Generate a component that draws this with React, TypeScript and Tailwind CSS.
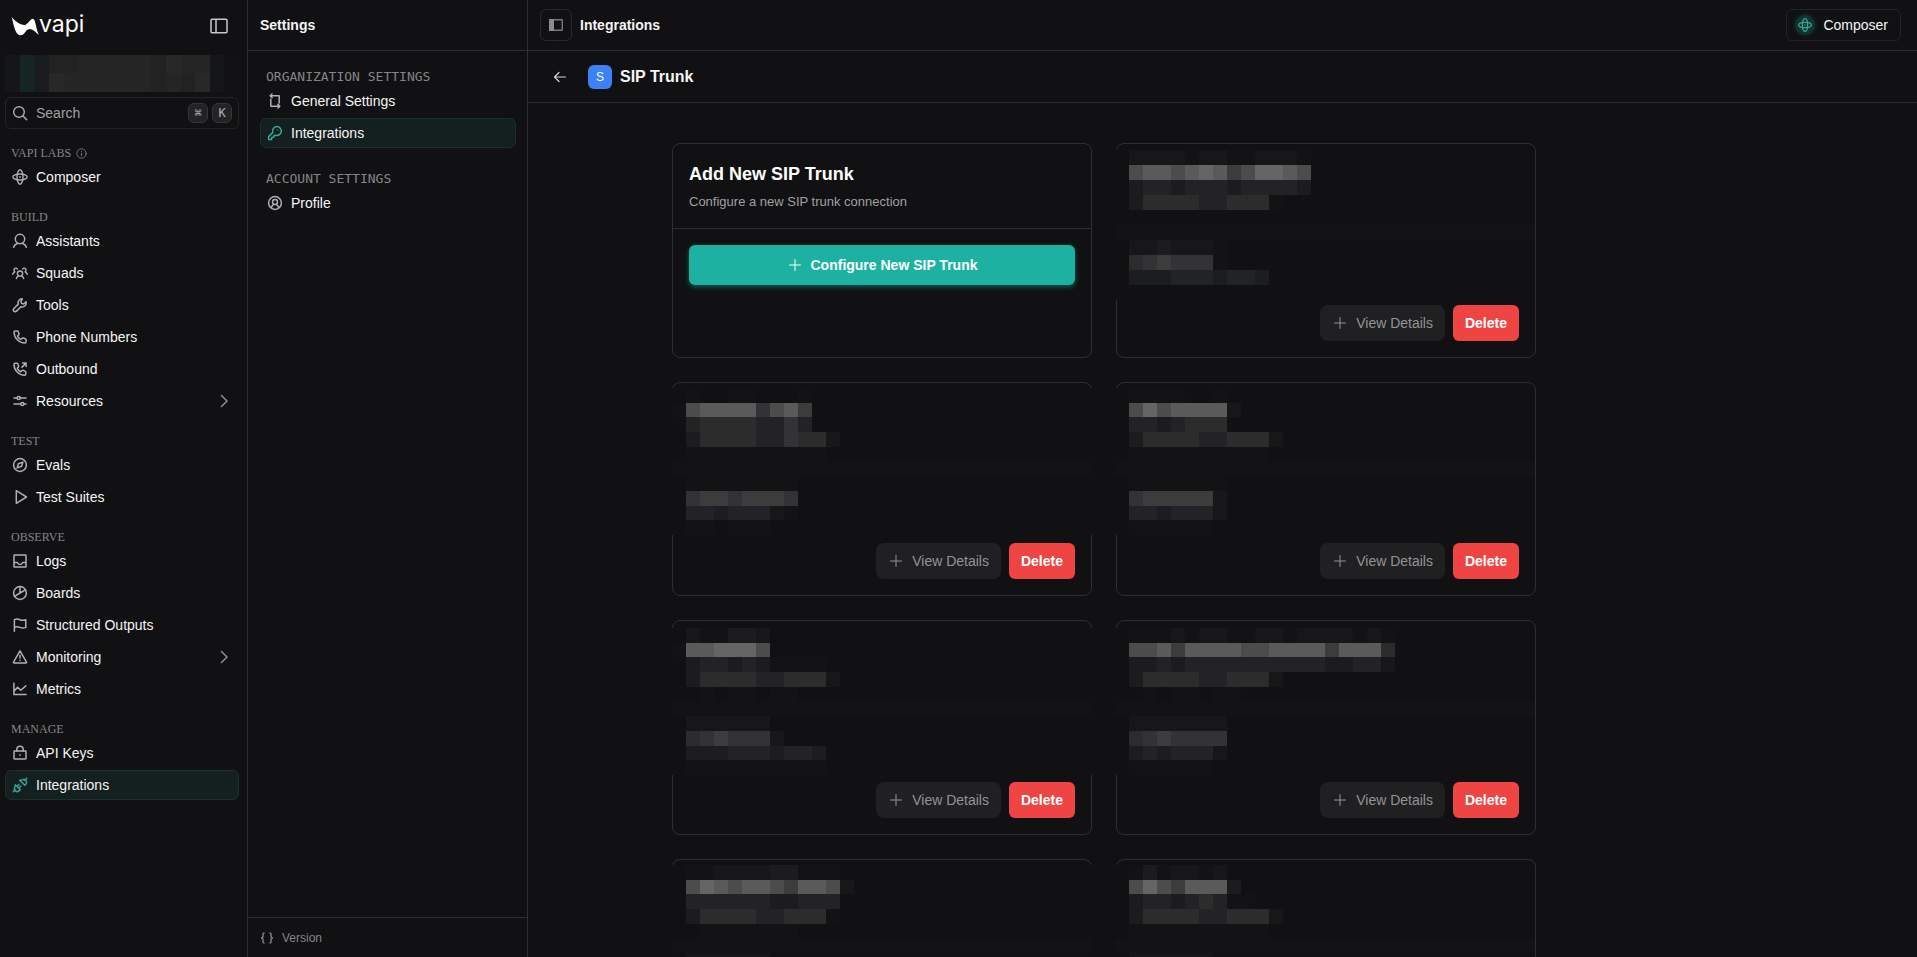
import React from "react";

type IconProps = { className?: string };

function Svg({ className = "", w = 1.5, children }: IconProps & { w?: number; children: React.ReactNode }) {
  return (
    <svg
      viewBox="0 0 16 16"
      aria-hidden="true"
      className={`size-4 shrink-0 ${className}`}
      fill="none"
      stroke="currentColor"
      strokeWidth={w}
      strokeLinecap="round"
      strokeLinejoin="round"
    >
      {children}
    </svg>
  );
}

const ComposerIcon = (p: IconProps) => (
  <Svg {...p} w={1.4}>
    <ellipse cx="8" cy="8" rx="7.2" ry="3" />
    <ellipse cx="8" cy="8" rx="3" ry="7.2" />
    <circle cx="8" cy="8" r="0.9" fill="currentColor" stroke="none" />
  </Svg>
);
const AssistantIcon = (p: IconProps) => (
  <Svg {...p}>
    <circle cx="8" cy="6" r="4.7" />
    <path d="M1.6 14.300c.6-2 2-3.400 4-4.100M14.400 14.300c-.6-2-2-3.400-4-4.100" />
  </Svg>
);
const SquadIcon = (p: IconProps) => (
  <Svg {...p} w={1.4}>
    <circle cx="8" cy="8.600" r="2.600" />
    <path d="M4.300 13.600c.3-1.300 1-2.200 2.100-2.800M11.700 13.600c-.3-1.300-1-2.200-2.100-2.800" />
    <path d="M5.300 3.900C4.300 2.500 2.100 3.100 2 4.900c0 .8.3 1.400.8 1.800M2.600 7C1.500 7.500.9 8.300.7 9.300M10.700 3.900c1-1.400 3.200-.8 3.300 1 0 .8-.3 1.400-.8 1.800M13.400 7c1.100.5 1.700 1.300 1.900 2.300" />
  </Svg>
);
const ToolIcon = (p: IconProps) => (
  <Svg {...p}>
    <path d="M10.300 1.800a4 4 0 0 0-4 5.300L1.900 11.500a1.800 1.800 0 0 0 2.600 2.600l4.400-4.400a4 4 0 0 0 5.100-5l-2.400 2.300-2.100-.6-.6-2.100z" />
  </Svg>
);
const PhoneIcon = (p: IconProps) => (
  <Svg {...p}>
    <path d="M3.200 1.900h2.200c.4 0 .6.300.8.700l.8 2.100c.1.400 0 .7-.2 1L5.600 7.100c.6 1.500 1.800 2.700 3.300 3.300l1.400-1.200c.3-.2.6-.3 1-.2l2.100.8c.4.200.7.400.7.800v2.200c0 .7-.5 1.200-1.200 1.200C7 14 2 9 2 3.100c0-.7.5-1.200 1.200-1.200z" />
  </Svg>
);
const OutboundIcon = (p: IconProps) => (
  <Svg {...p}>
    <path d="M3.200 2.300h1.900c.4 0 .6.300.8.700l.7 1.900c.1.400 0 .7-.2 1L5.300 7.100c.6 1.500 1.900 2.900 3.500 3.600l1.300-1.200c.3-.2.6-.3 1-.2l2 .8c.4.200.7.400.7.800V13c0 .7-.5 1.200-1.200 1.200C6.800 14.200 2 9.200 2 3.500c0-.7.5-1.200 1.200-1.200zM10 6.100l4-4M10.600 2h3.500v3.500" />
  </Svg>
);
const SliderIcon = (p: IconProps) => (
  <Svg {...p}>
    <path d="M2 5h3M8.400 5H14M2 11h6.600M12 11h2" />
    <circle cx="6.700" cy="5" r="1.600" />
    <circle cx="10.300" cy="11" r="1.600" />
  </Svg>
);
const CompassIcon = (p: IconProps) => (
  <Svg {...p}>
    <circle cx="8" cy="8" r="6.400" />
    <path d="M10.900 5.100 9.600 9.200 5.100 10.900 6.400 6.800z" />
  </Svg>
);
const PlayIcon = (p: IconProps) => (
  <Svg {...p}>
    <path d="M4.300 1.700v12.600L14.500 8z" />
  </Svg>
);
const LogsIcon = (p: IconProps) => (
  <Svg {...p}>
    <rect x="2" y="2" width="12" height="12" rx=".6" />
    <path d="M2.200 9.600h3.300c.3 1.100 1.200 1.800 2.500 1.800s2.200-.7 2.500-1.800h3.300" />
  </Svg>
);
const BoardsIcon = (p: IconProps) => (
  <Svg {...p}>
    <circle cx="8" cy="8" r="6.400" />
    <path d="M8 1.600V8l5.500-3.200M8 8l-5.500 3.300" />
  </Svg>
);
const FlagIcon = (p: IconProps) => (
  <Svg {...p}>
    <path d="M2.400 14.300V2.700c2-1 3.700-.9 5.600 0s3.600.9 5.800 0v7.700c-2.200.9-3.900.9-5.800 0s-3.600-1-5.600 0" />
  </Svg>
);
const AlertIcon = (p: IconProps) => (
  <Svg {...p}>
    <path d="M8 1.900 14.500 13.200c.2.300 0 .7-.4.700H1.900c-.4 0-.6-.4-.4-.7zM8 6.300v2.700M8 11.200v.4" />
  </Svg>
);
const MetricIcon = (p: IconProps) => (
  <Svg {...p}>
    <path d="M1.900 2.300v11.300h12.200M2.200 10 5.600 6.300l3.200 3 5-4.400" />
  </Svg>
);
const LockIcon = (p: IconProps) => (
  <Svg {...p}>
    <rect x="2" y="6" width="12" height="8" rx=".7" />
    <path d="M4.800 6V4.600C4.800 2.700 6.100 1.300 8 1.300s3.200 1.400 3.200 3.300V6M8 9.800v.4" />
  </Svg>
);
const PlugIcon = (p: IconProps) => (
  <Svg {...p} w={1.4}>
    <path d="M1.300 14.700l1.900-1.900M14.700 1.300l-1.900 1.900M3.300 7.700l5 5-.9.900c-1.200 1.200-3 1.200-4.200.1s-1.100-3 0-4.200zM7.700 3.300l5 5 .9-.9c1.200-1.200 1.200-3 .1-4.200s-3-1.100-4.200 0zM5.200 9.200l1.900-1.900M7 11l1.900-1.900" />
  </Svg>
);
const CropArrowsIcon = (p: IconProps) => (
  <Svg {...p}>
    <path d="M5 1 3.200 2.800 5 4.600M3.500 2.800h8.700v7.200M11 11.400l1.800 1.800L11 15M12.500 13.200H3.800V6.200" />
  </Svg>
);
const KeyIcon = (p: IconProps) => (
  <Svg {...p}>
    <path d="M10 1.600a4.400 4.400 0 0 0-4.200 5.800L1.600 11.600v2.800h3l.2-2 2-.3.300-1.700 1.500-.2a4.400 4.400 0 1 0 1.400-8.600z" />
    <circle cx="10.900" cy="5.100" r=".7" fill="currentColor" stroke="none" />
  </Svg>
);
const ProfileIcon = (p: IconProps) => (
  <Svg {...p}>
    <circle cx="8" cy="8" r="6.400" />
    <circle cx="8" cy="6.900" r="2.500" />
    <path d="M4.300 12.800c.4-1.600 1.300-2.700 2.500-3.400M11.700 12.800c-.4-1.600-1.300-2.700-2.500-3.400" />
  </Svg>
);
const SearchIcon = (p: IconProps) => (
  <Svg {...p}>
    <circle cx="7" cy="7" r="5.300" />
    <path d="M11 11l3.600 3.600" />
  </Svg>
);
const ChevronIcon = (p: IconProps) => (
  <Svg {...p}>
    <path d="M5.500 2.500 11 8l-5.500 5.500" />
  </Svg>
);
const PlusIcon = (p: IconProps) => (
  <Svg {...p} w={1}>
    <path d="M8 2.500v11M2.500 8h11" />
  </Svg>
);
const InfoIcon = () => (
  <Svg className="size-[11px]!" w={1.2}>
    <circle cx="8" cy="8" r="6.800" />
    <path d="M8 7.300v4M8 4.700v.3" />
  </Svg>
);

type NavEntry = { label: string; icon: (p: IconProps) => React.ReactNode; active?: boolean; more?: boolean };

const groups: { title: string; info?: boolean; items: NavEntry[] }[] = [
  { title: "VAPI LABS", info: true, items: [{ label: "Composer", icon: ComposerIcon }] },
  {
    title: "BUILD",
    items: [
      { label: "Assistants", icon: AssistantIcon },
      { label: "Squads", icon: SquadIcon },
      { label: "Tools", icon: ToolIcon },
      { label: "Phone Numbers", icon: PhoneIcon },
      { label: "Outbound", icon: OutboundIcon },
      { label: "Resources", icon: SliderIcon, more: true },
    ],
  },
  {
    title: "TEST",
    items: [
      { label: "Evals", icon: CompassIcon },
      { label: "Test Suites", icon: PlayIcon },
    ],
  },
  {
    title: "OBSERVE",
    items: [
      { label: "Logs", icon: LogsIcon },
      { label: "Boards", icon: BoardsIcon },
      { label: "Structured Outputs", icon: FlagIcon },
      { label: "Monitoring", icon: AlertIcon, more: true },
      { label: "Metrics", icon: MetricIcon },
    ],
  },
  {
    title: "MANAGE",
    items: [
      { label: "API Keys", icon: LockIcon },
      { label: "Integrations", icon: PlugIcon, active: true },
    ],
  },
];

const settingsGroups: { title: string; items: NavEntry[] }[] = [
  {
    title: "ORGANIZATION SETTINGS",
    items: [
      { label: "General Settings", icon: CropArrowsIcon },
      { label: "Integrations", icon: KeyIcon, active: true },
    ],
  },
  { title: "ACCOUNT SETTINGS", items: [{ label: "Profile", icon: ProfileIcon }] },
];

function NavRow({ item }: { item: NavEntry }) {
  const Icon = item.icon;
  return (
    <li className="py-px">
      <a
        href="#"
        aria-current={item.active ? "page" : undefined}
        className={`flex h-[30px] items-center gap-2 rounded-md border px-1.5 text-sm text-[#f5f5f5] ${
          item.active ? "border-[#1b302d] bg-[#141f1f]" : "border-transparent"
        }`}
      >
        <Icon className={item.active ? "text-[#3aa697]" : "text-[#b0b0b2]"} />
        <span className="flex-1">{item.label}</span>
        {item.more && <ChevronIcon className="text-[#8f8f91]" />}
      </a>
    </li>
  );
}

const shade: Record<string, string> = {
  ".": "",
  "1": "bg-[#131315]",
  "2": "bg-[#171719]",
  "3": "bg-[#1c1c1e]",
  "4": "bg-[#232325]",
  "5": "bg-[#2c2c2d]",
  "6": "bg-[#333335]",
  "7": "bg-[#3c3c3d]",
  "8": "bg-[#4c4c4d]",
  "9": "bg-[#5a5a5a]",
  a: "bg-[#656565]",
  b: "bg-[#1b1d21]",
  c: "bg-[#212327]",
};

const cardMosaics: string[][] = [
  [".2222122112221", ".89989a978aa98", ".3443444344443", ".35555445551", "", "", ".2232221", ".5676661", ".bbbcccbccb", ""],
  [".1..11...1", "1899996897", ".455554464", ".35555446552", ".1111111111", "", ".11111111", ".67767776", ".ccbccc21", ".11.111"],
  [".1111..1", ".8a899992", ".4434555", ".35555445552", ".1111111111", "", ".1111111", ".6777772", ".ccbccc2", ".111111"],
  [".211332", "199aaa8", ".3443431111", ".35555445552", "..1.11.11", "", ".222222", ".5676662", ".bbbcccbccb", ".1111111111"],
  [".1112122112212222121", ".8897999988999979995", ".3343444444444433442", ".35555445552", "..1.11.11", "", ".2222222", ".5676666", ".bcbccc2", ".111111"],
  [".11222233111", ".8a9899879982", ".44444433444", ".35555445551", "..1111111", "", ".222222", ".568776", ".bbbccc", ""],
  [".1312212", ".8a879993", ".344345411", ".35555445552", ".1111111111", "", ".222222", ".568776", ".bbbccc", ""],
];

function Mosaic({ rows, rowSizes, edge }: { rows: string[]; rowSizes: string; edge: string }) {
  return (
    <div aria-hidden="true" className={`grid bg-[#111113] ${rowSizes} ${edge}`}>
      {rows.map((row, r) => (
        <div key={r} className={`flex ${r === 5 ? "bg-[#131315]" : ""}`}>
          {row.split("").map((c, i) => (
            <span key={i} className={`w-3.5 shrink-0 ${shade[c]}`} />
          ))}
        </div>
      ))}
    </div>
  );
}

const cardSizes = [
  "min-h-[215px] pt-1.5",
  "min-h-[214px] pt-[5px]",
  "min-h-[214px] pt-[5px]",
  "min-h-[215px] pt-[7px]",
  "min-h-[215px] pt-[7px]",
  "min-h-[214px] pt-[5px]",
  "min-h-[214px] pt-[5px]",
];

function TrunkCard({ index }: { index: number }) {
  const rightColumn = index % 2 === 0;
  return (
    <article className={`flex flex-col justify-between rounded-lg border border-[#2f2f31] ${cardSizes[index]}`}>
      <Mosaic
        rows={cardMosaics[index]}
        rowSizes={
          index === 0 ? "grid-rows-[repeat(10,15px)]" : "grid-rows-[15px_14px_15px_15px_15px_14px_15px_15px_14px_15px]"
        }
        edge={rightColumn ? "-ml-[2px]" : "-mx-px"}
      />
      <div className="flex justify-end gap-2 px-4 pb-4">
        <button type="button" className="flex h-9 items-center gap-2 rounded-lg bg-[#202022] px-3 text-sm text-[#939395]">
          <PlusIcon />
          View Details
        </button>
        <button type="button" className="h-9 rounded-md bg-[#ef4444] px-3 text-sm font-bold text-white">
          Delete
        </button>
      </div>
    </article>
  );
}

const orgRows = [".g233444443544.6", ".g254444443435.6"];
const orgShade: Record<string, string> = {
  ".": "bg-[#141617]",
  g: "bg-[#142522]",
  "2": "bg-[#1a1b1c]",
  "3": "bg-[#222223]",
  "4": "bg-[#252526]",
  "5": "bg-[#282829]",
  "6": "bg-[#121214]",
};

export default function App() {
  return (
    <div className="flex h-screen overflow-hidden bg-[#111113] font-['Liberation_Sans',Arial,sans-serif] text-[#f5f5f5]">
      <aside className="flex w-[248px] shrink-0 flex-col border-r border-[#2f2f31] pr-2 pl-[5px]">
        <div className="flex h-[51px] items-center justify-between pr-[11px] pl-1.5">
          <a href="#" aria-label="vapi home" className="flex items-center text-white">
            <svg viewBox="0 0 28 20" aria-hidden="true" className="h-5 w-7" fill="currentColor">
              <path d="M.6.9C4 5.200 9.500 9.200 14 8.900 17 8.300 19 3.200 21.800 2.800c3 .2 2.600 8.600 6 16.200-3.400-3.400-6-6-9.300-6.100-2.500 0-3.700 2.500-5.500 4.800-1.400 1.700-4.800 1.900-6.200.5C3.300 14.500 2.400 7 .6.900z" />
            </svg>
            <span className="pb-1 font-['Inter',sans-serif] text-[23px] leading-6">vapi</span>
          </a>
          <button type="button" aria-label="Collapse sidebar">
            <svg viewBox="0 0 18 16" aria-hidden="true" className="h-4 w-[18px]" fill="none" stroke="#c9c9cb" strokeWidth="1.500">
              <rect x="1" y="1.300" width="16" height="13.400" rx="1" />
              <path d="M6 1.300v13.400" />
            </svg>
          </button>
        </div>
        <div aria-hidden="true" className="mt-1 grid grid-rows-[18px_19px]">
          {orgRows.map((row) => (
            <div key={row} className="grid grid-cols-16">
              {row.split("").map((c, i) => (
                <span key={i} className={orgShade[c]} />
              ))}
            </div>
          ))}
        </div>
        <label className="mt-[5px] flex h-8 items-center gap-2 rounded-md border border-[#242426] px-1.5">
          <SearchIcon className="text-[#a5a5a7]" />
          <input
            type="text"
            aria-label="Search"
            placeholder="Search"
            className="min-w-0 flex-1 bg-transparent text-sm outline-none placeholder:text-[#a0a0a2]"
          />
          <span className="flex gap-1">
            <kbd className="flex size-5 items-center justify-center rounded-md border border-[#363638] bg-[#232325] font-['DejaVu_Sans_Mono',monospace] text-xs text-[#b4b4b6]">
              ⌘
            </kbd>
            <kbd className="flex size-5 items-center justify-center rounded-md border border-[#363638] bg-[#232325] font-['DejaVu_Sans_Mono',monospace] text-xs text-[#b4b4b6]">
              K
            </kbd>
          </span>
        </label>
        <nav aria-label="Main" className="mt-4 flex flex-col gap-4">
          {groups.map((g) => (
            <section key={g.title}>
              <h2 className="flex items-center gap-[5px] pl-1.5 font-['Liberation_Serif',serif] text-xs leading-4 text-[#858587]">
                {g.title}
                {g.info && <InfoIcon />}
              </h2>
              <ul>
                {g.items.map((item) => (
                  <NavRow key={item.label} item={item} />
                ))}
              </ul>
            </section>
          ))}
        </nav>
      </aside>

      <aside className="flex w-[280px] shrink-0 flex-col border-r border-[#2f2f31]">
        <h1 className="flex h-[51px] items-center border-b border-[#2f2f31] px-3 text-sm font-bold">Settings</h1>
        <nav aria-label="Settings" className="flex flex-1 flex-col gap-[22px] pt-[18px] pr-[11px] pl-3">
          {settingsGroups.map((g) => (
            <section key={g.title}>
              <h2 className="pl-1.5 font-['DejaVu_Sans_Mono',monospace] text-[13px] leading-4 text-[#858587]">{g.title}</h2>
              <ul>
                {g.items.map((item) => (
                  <NavRow key={item.label} item={item} />
                ))}
              </ul>
            </section>
          ))}
        </nav>
        <footer className="flex h-10 items-center gap-2 border-t border-[#2f2f31] px-3 text-xs text-[#858587]">
          <svg viewBox="0 0 14 12" aria-hidden="true" className="h-3 w-3.5" fill="none" stroke="currentColor" strokeWidth="1.400">
            <path d="M4.500 1C2.500 1 3 2.200 3 4c0 1.300-.6 2-2 2 1.400 0 2 .7 2 2 0 1.800-.5 3 1.500 3M9.500 1c2 0 1.500 1.200 1.500 3 0 1.300.6 2 2 2-1.400 0-2 .7-2 2 0 1.800.5 3-1.500 3" />
          </svg>
          Version
        </footer>
      </aside>

      <div className="flex min-w-0 flex-1 flex-col">
        <header className="flex h-[51px] shrink-0 items-center border-b border-[#2f2f31] pr-4 pl-3">
          <button
            type="button"
            aria-label="Toggle settings panel"
            className="mr-2 flex size-8 items-center justify-center rounded-md border border-[#29292b]"
          >
            <svg viewBox="0 0 14 12" aria-hidden="true" className="h-3 w-3.5">
              <rect x=".7" y=".7" width="12.600" height="10.600" rx=".6" fill="none" stroke="#77777a" strokeWidth="1.400" />
              <rect x="0" y="0" width="5" height="12" rx=".6" fill="#8b8b8e" />
            </svg>
          </button>
          <h2 className="flex-1 text-sm font-bold">Integrations</h2>
          <button type="button" className="flex h-8 items-center gap-2 rounded-md border border-[#242426] px-2 text-sm">
            <span className="flex size-5 items-center justify-center rounded-full bg-[#12332f] shadow-[0_0_4px_#12332f]">
              <ComposerIcon className="size-3.5! text-[#3aa697]" />
            </span>
            <span className="pr-1">Composer</span>
          </button>
        </header>
        <div className="flex h-[52px] shrink-0 items-center gap-2 border-b border-[#2f2f31] px-4">
          <button type="button" aria-label="Back" className="mr-1 flex size-8 items-center justify-center text-[#d4d4d6]">
            <Svg w={1.2}>
              <path d="M13.500 8h-11M7 3.500 2.500 8 7 12.500" />
            </Svg>
          </button>
          <span className="flex size-6 items-center justify-center rounded-md bg-[#3b82f6] text-xs text-white">S</span>
          <h1 className="text-base font-bold">SIP Trunk</h1>
        </div>
        <main className="min-h-0 flex-1 overflow-y-auto [scrollbar-width:none]">
          <div className="max-w-6xl py-10">
            <div className="mx-auto grid max-w-[864px] grid-cols-2 gap-6">
              <article className="flex flex-col rounded-lg border border-[#2f2f31]">
                <div className="border-b border-[#2f2f31] p-4">
                  <h2 className="text-lg leading-7 font-bold text-white">Add New SIP Trunk</h2>
                  <p className="mt-1 text-[13px] leading-5 text-[#a0a0a2]">Configure a new SIP trunk connection</p>
                </div>
                <div className="p-4">
                  <button
                    type="button"
                    className="flex h-10 w-full items-center justify-center gap-2 rounded-md bg-[#1db1a1] text-sm font-bold text-white shadow-[0_2px_5px_#145c55]"
                  >
                    <PlusIcon />
                    Configure New SIP Trunk
                  </button>
                </div>
              </article>
              {cardMosaics.map((rows, i) => (
                <TrunkCard key={rows[1]} index={i} />
              ))}
            </div>
          </div>
        </main>
      </div>
    </div>
  );
}
